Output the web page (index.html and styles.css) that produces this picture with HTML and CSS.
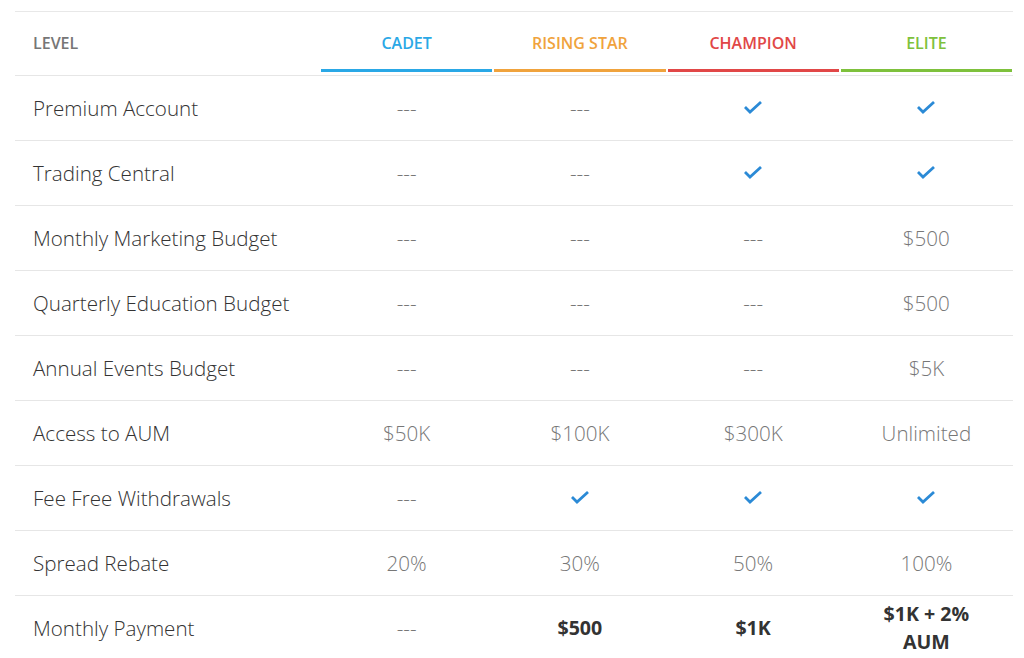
FILE: index.html
```html
<!DOCTYPE html>
<html>
<head>
<meta charset="utf-8">
<link rel="stylesheet" href="styles.css">
</head>
<body>
<table class="levels">
  <colgroup>
    <col class="col-label">
    <col class="col-val"><col class="col-val"><col class="col-val"><col class="col-val">
  </colgroup>
  <thead>
    <tr>
      <th class="h-label">LEVEL</th>
      <th><div class="tier cadet">CADET</div></th>
      <th><div class="tier rising">RISING STAR</div></th>
      <th><div class="tier champion">CHAMPION</div></th>
      <th><div class="tier elite">ELITE</div></th>
    </tr>
  </thead>
  <tbody>
    <tr>
      <td class="label">Premium Account</td>
      <td>---</td><td>---</td>
      <td><svg class="check" viewBox="0 0 20 14"><polyline points="2,7 7,12 18,2"/></svg></td>
      <td><svg class="check" viewBox="0 0 20 14"><polyline points="2,7 7,12 18,2"/></svg></td>
    </tr>
    <tr>
      <td class="label">Trading Central</td>
      <td>---</td><td>---</td>
      <td><svg class="check" viewBox="0 0 20 14"><polyline points="2,7 7,12 18,2"/></svg></td>
      <td><svg class="check" viewBox="0 0 20 14"><polyline points="2,7 7,12 18,2"/></svg></td>
    </tr>
    <tr>
      <td class="label">Monthly Marketing Budget</td>
      <td>---</td><td>---</td><td>---</td><td>$500</td>
    </tr>
    <tr>
      <td class="label">Quarterly Education Budget</td>
      <td>---</td><td>---</td><td>---</td><td>$500</td>
    </tr>
    <tr>
      <td class="label">Annual Events Budget</td>
      <td>---</td><td>---</td><td>---</td><td>$5K</td>
    </tr>
    <tr>
      <td class="label">Access to AUM</td>
      <td>$50K</td><td>$100K</td><td>$300K</td><td>Unlimited</td>
    </tr>
    <tr>
      <td class="label">Fee Free Withdrawals</td>
      <td>---</td>
      <td><svg class="check" viewBox="0 0 20 14"><polyline points="2,7 7,12 18,2"/></svg></td>
      <td><svg class="check" viewBox="0 0 20 14"><polyline points="2,7 7,12 18,2"/></svg></td>
      <td><svg class="check" viewBox="0 0 20 14"><polyline points="2,7 7,12 18,2"/></svg></td>
    </tr>
    <tr>
      <td class="label">Spread Rebate</td>
      <td>20%</td><td>30%</td><td>50%</td><td>100%</td>
    </tr>
    <tr>
      <td class="label">Monthly Payment</td>
      <td>---</td><td class="strong">$500</td><td class="strong">$1K</td><td class="strong wrap">$1K + 2% AUM</td>
    </tr>
  </tbody>
</table>
</body>
</html>
```
FILE: styles.css
```css
html, body {
  margin: 0;
  padding: 0;
  background: #fff;
}
body {
  padding-top: 11px;
  font-family: "Open Sans", "Liberation Sans", sans-serif;
}
.levels {
  margin-left: 15px;
  width: 998px;
  border-collapse: collapse;
  table-layout: fixed;
  border-top: 1px solid #e8e8e8;
}
.col-label { width: 305px; }
.levels th {
  height: 58px;
  padding: 0 0 3px 0;
  vertical-align: bottom;
  font-size: 16px;
  font-weight: 600;
  border-bottom: 1px solid #e6e6e6;
}
.levels th.h-label {
  text-align: left;
  padding-left: 18px;
  color: #767676;
  vertical-align: middle;
  padding-top: 2px;
  padding-bottom: 3px;
}
.tier {
  margin: 0 1px;
  padding-bottom: 15px;
  border-bottom: 3px solid;
  text-align: center;
}
.cadet { color: #2aa8e6; border-color: #2aa8e6; }
.rising { color: #f0a33d; border-color: #f0a33d; }
.champion { color: #e14747; border-color: #e14747; }
.elite { color: #7ec13c; border-color: #7ec13c; }
.levels td {
  height: 56px;
  padding: 4px 0;
  vertical-align: middle;
  text-align: center;
  font-size: 20.6px;
  line-height: 28px;
  font-weight: 300;
  color: #777;
  border-bottom: 1px solid #e6e6e6;
}
.levels td.label {
  text-align: left;
  padding-left: 18px;
  color: #333;
}
.levels td.strong {
  font-weight: 700;
  color: #333;
  font-size: 19.6px;
}
.levels td.wrap {
  padding-left: 36px;
  padding-right: 36px;
}
.check {
  width: 20px;
  height: 14px;
  display: block;
  margin: 0 auto 2px;
}
.check polyline {
  fill: none;
  stroke: #2b8ad6;
  stroke-width: 2.8;
}
```
